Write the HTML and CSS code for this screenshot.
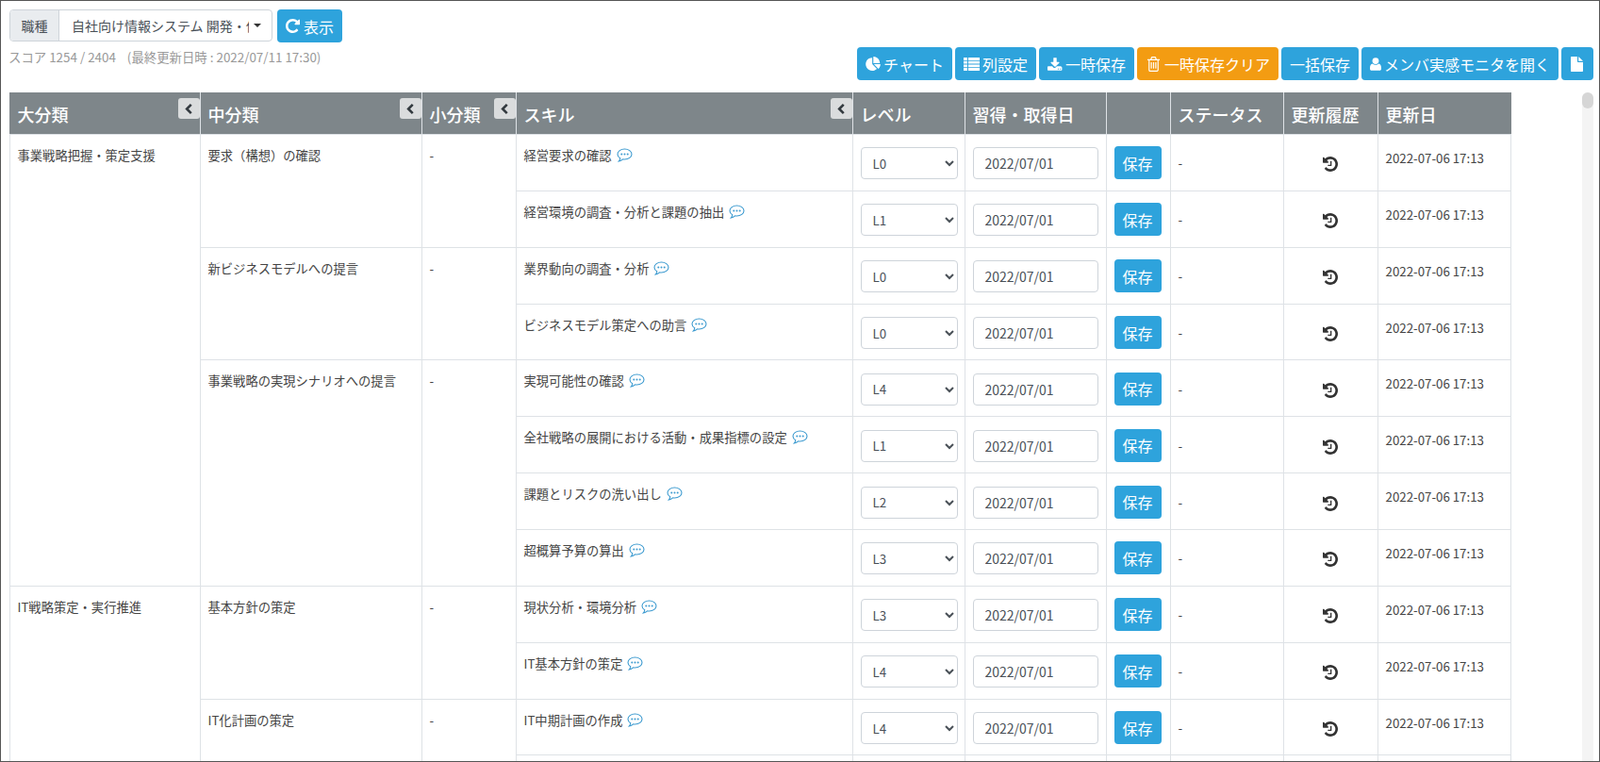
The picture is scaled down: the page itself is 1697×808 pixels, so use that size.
FILE: index.html
```html
<!DOCTYPE html>
<html lang="ja">
<head>
<meta charset="utf-8">
<title>スキル管理</title>
<link rel="stylesheet" href="styles.css">
</head>
<body>
<svg class="defs" aria-hidden="true">
  <symbol id="i-repeat" viewBox="0 0 1536 1536"><path d="M1536 128v448q0 26-19 45t-45 19h-448q-42 0-59-40-17-39 14-69l138-138Q969 256 768 256q-104 0-198.500 40.500T406 406 296.500 569.500 256 768t40.500 198.500T406 1130t163.500 109.500T768 1280q119 0 225-52t179-147q7-10 23-12 14 0 25 9l137 138q9 8 9.500 20.500t-7.500 22.500q-109 132-264 204.500T768 1536q-156 0-298-61t-245-164-164-245T0 768t61-298 164-245T470 61 768 0q147 0 284.500 55.500T1297 212l130-129q29-31 70-14 39 17 39 59z"/></symbol>
  <symbol id="i-pie" viewBox="0 0 1728 1664"><path d="M768 890l546 546q-106 108-247.500 168T768 1664q-209 0-385.500-103T103 1281 0 896t103-385.500T383 231 768 128v762zm187 6h773q0 157-60 298.500T1492 1442L955 896zm709-128H896V0q209 0 385.500 103T1561 383t103 385z"/></symbol>
  <symbol id="i-list" viewBox="0 0 17 14"><path d="M0 0h4v2.900H0zM5 0h12v2.900H5zM0 3.700h4v2.900H0zM5 3.700h12v2.900H5zM0 7.400h4v2.900H0zM5 7.400h12v2.900H5zM0 11.100h4V14H0zM5 11.100h12V14H5z"/></symbol>
  <symbol id="i-download" viewBox="0 0 1792 1536"><path d="M1344 1344q0-26-19-45t-45-19-45 19-19 45 19 45 45 19 45-19 19-45zm256 0q0-26-19-45t-45-19-45 19-19 45 19 45 45 19 45-19 19-45zm128-224v320q0 40-28 68t-68 28H96q-40 0-68-28t-28-68v-320q0-40 28-68t68-28h465l135 136q58 56 136 56t136-56l136-136h464q40 0 68 28t28 68zm-325-569q17 41-14 70L941 1069q-18 19-45 19t-45-19L403 621q-31-29-14-70 17-39 59-39h256V64q0-26 19-45t45-19h256q26 0 45 19t19 45v448h256q42 0 59 39z"/></symbol>
  <symbol id="i-trash" viewBox="190 128 1410 1536" preserveAspectRatio="none"><path d="M704 736v576q0 14-9 23t-23 9h-64q-14 0-23-9t-9-23V736q0-14 9-23t23-9h64q14 0 23 9t9 23zm256 0v576q0 14-9 23t-23 9h-64q-14 0-23-9t-9-23V736q0-14 9-23t23-9h64q14 0 23 9t9 23zm256 0v576q0 14-9 23t-23 9h-64q-14 0-23-9t-9-23V736q0-14 9-23t23-9h64q14 0 23 9t9 23zm128 724V512H448v948q0 22 7 40.500t14.500 27 10.500 8.500h832q3 0 10.500-8.500t14.500-27 7-40.500zM672 384h448l-48-117q-7-9-17-11H738q-10 2-17 11zm928 32v64q0 14-9 23t-23 9h-96v948q0 83-47 143.500t-113 60.500H480q-66 0-113-58.500T320 1464V512h-96q-14 0-23-9t-9-23v-64q0-14 9-23t23-9h309l70-167q15-37 54-63t79-26h320q40 0 79 26t54 63l70 167h309q14 0 23 9t9 23z"/></symbol>
  <symbol id="i-user" viewBox="0 0 14 16"><circle cx="7" cy="4" r="4"/><path d="M3.200 7.500C4.200 8.500 5.500 9 7 9s2.800-.5 3.800-1.500C13 7.500 14 10 14 13.500c0 1.500-.9 2.500-2.100 2.500H2.100C.9 16 0 15 0 13.500 0 10 1 7.500 3.200 7.500z"/></symbol>
  <symbol id="i-file" viewBox="0 0 13 16"><path d="M0 1c0-.6.400-1 1-1h6v5c0 .6.400 1 1 1h5v9c0 .6-.4 1-1 1H1c-.6 0-1-.4-1-1zM8.200 0L13 4.800H8.200z"/></symbol>
  <symbol id="i-history" viewBox="0 0 1536 1536"><path d="M1536 768q0 156-61 298t-164 245-245 164-298 61q-172 0-327-72.500T177 1259q-7-10-6.500-22.500T179 1216l137-138q10-9 25-9 16 2 23 12 73 95 179 147t225 52q104 0 198.500-40.500T1130 1130t109.500-163.500T1280 768t-40.500-198.500T1130 406 966.500 296.500 768 256q-98 0-188 35.500T420 393l137 138q31 30 14 69-17 40-59 40H64q-26 0-45-19T0 576V128q0-42 40-59 39-17 69 14l130 129Q346 113 483 56.500T768 0q156 0 298 61t245 164 164 245 61 298zM896 480v448q0 14-9 23t-23 9H544q-14 0-23-9t-9-23v-64q0-14 9-23t23-9h224V480q0-14 9-23t23-9h64q14 0 23 9t9 23z"/></symbol>
  <symbol id="i-comment" viewBox="0 0 17 16"><path class="bubble" d="M8.500 1C4.400 1 1 3.400 1 6.500c0 1.700 1.100 3.300 2.800 4.300-.1 1.200-.6 2.200-1.400 3.100 1.600-.3 3.200-1.200 4.200-2.100.6.100 1.300.2 1.900.2 4.100 0 7.500-2.400 7.500-5.500S12.600 1 8.500 1z"/><circle cx="5.300" cy="6.500" r="1"/><circle cx="8.500" cy="6.500" r="1"/><circle cx="11.700" cy="6.500" r="1"/></symbol>
  <symbol id="i-left" viewBox="0 0 8 12"><path d="M6 0L8 2 4 6l4 4-2 2L0 6z"/></symbol>
</svg>

<div class="frame">
  <header class="topbar">
    <div class="top-left">
      <div class="form-row">
        <div class="input-group">
          <span class="group-label">職種</span>
          <div class="group-select">
            <span class="select-text">自社向け情報システム 開発・保守</span>
            <span class="caret"></span>
          </div>
        </div>
        <button class="btn btn-show" type="button"><svg class="ic ic-repeat"><use href="#i-repeat"/></svg>表示</button>
      </div>
      <p class="score">スコア 1254 / 2404 &nbsp;&nbsp;&nbsp;(最終更新日時 : 2022/07/11 17:30)</p>
    </div>
    <div class="toolbar">
      <button class="btn" type="button"><svg class="ic ic-pie"><use href="#i-pie"/></svg>チャート</button>
      <button class="btn" type="button"><svg class="ic ic-list"><use href="#i-list"/></svg>列設定</button>
      <button class="btn" type="button"><svg class="ic ic-download"><use href="#i-download"/></svg>一時保存</button>
      <button class="btn btn-warn" type="button"><svg class="ic ic-trash"><use href="#i-trash"/></svg>一時保存クリア</button>
      <button class="btn" type="button">一括保存</button>
      <button class="btn" type="button"><svg class="ic ic-user"><use href="#i-user"/></svg>メンバ実感モニタを開く</button>
      <button class="btn" type="button"><svg class="ic ic-file"><use href="#i-file"/></svg></button>
    </div>
  </header>

  <div class="content">
    <div class="table-wrap">
      <table class="skills">
        <colgroup>
          <col class="c-major"><col class="c-mid"><col class="c-minor"><col class="c-skill"><col class="c-level"><col class="c-date"><col class="c-save"><col class="c-status"><col class="c-hist"><col class="c-updated">
        </colgroup>
        <thead>
          <tr>
            <th>大分類<button class="collapse" type="button"><svg class="ic-left"><use href="#i-left"/></svg></button></th>
            <th>中分類<button class="collapse" type="button"><svg class="ic-left"><use href="#i-left"/></svg></button></th>
            <th>小分類<button class="collapse" type="button"><svg class="ic-left"><use href="#i-left"/></svg></button></th>
            <th>スキル<button class="collapse" type="button"><svg class="ic-left"><use href="#i-left"/></svg></button></th>
            <th>レベル</th><th>習得・取得日</th><th></th><th>ステータス</th><th>更新履歴</th><th>更新日</th>
          </tr>
        </thead>
        <tbody id="rows"></tbody>
      </table>
    </div>
    <div class="scrollbar"><div class="thumb"></div></div>
  </div>
</div>
<script src="rows.js"></script>
</body>
</html>
```
FILE: rows.js
```js
var rows = [
  ["事業戦略把握・策定支援", 8, "要求（構想）の確認", 2, "経営要求の確認", "L0"],
  [null, 0, null, 0, "経営環境の調査・分析と課題の抽出", "L1"],
  [null, 0, "新ビジネスモデルへの提言", 2, "業界動向の調査・分析", "L0"],
  [null, 0, null, 0, "ビジネスモデル策定への助言", "L0"],
  [null, 0, "事業戦略の実現シナリオへの提言", 4, "実現可能性の確認", "L4"],
  [null, 0, null, 0, "全社戦略の展開における活動・成果指標の設定", "L1"],
  [null, 0, null, 0, "課題とリスクの洗い出し", "L2"],
  [null, 0, null, 0, "超概算予算の算出", "L3"],
  ["IT戦略策定・実行推進", 5, "基本方針の策定", 2, "現状分析・環境分析", "L3"],
  [null, 0, null, 0, "IT基本方針の策定", "L4"],
  [null, 0, "IT化計画の策定", 3, "IT中期計画の作成", "L4"]
];
var levels = ["L0", "L1", "L2", "L3", "L4", "L5"];
var html = "";
rows.forEach(function (r) {
  html += "<tr>";
  if (r[0]) html += '<td class="top" rowspan="' + r[1] + '">' + r[0] + "</td>";
  if (r[2]) {
    html += '<td class="top" rowspan="' + r[3] + '">' + r[2] + "</td>";
    html += '<td class="top" rowspan="' + r[3] + '">-</td>';
  }
  html += '<td class="top">' + r[4] + ' <svg class="ic-comment"><use href="#i-comment"/></svg></td>';
  html += '<td class="mid"><select class="ctl ctl-level">' + levels.map(function (l) {
    return "<option" + (l === r[5] ? " selected" : "") + ">" + l + "</option>";
  }).join("") + "</select></td>";
  html += '<td class="mid"><input class="ctl ctl-date" type="text" value="2022/07/01"></td>';
  html += '<td class="save"><button class="btn btn-save" type="button">保存</button></td>';
  html += '<td class="mid">-</td>';
  html += '<td class="mid"><svg class="ic-history"><use href="#i-history"/></svg></td>';
  html += '<td class="top updated">2022-07-06 17:13</td>';
  html += "</tr>";
});
html += '<tr class="tail"><td></td><td></td><td></td><td></td><td></td><td></td><td></td></tr>';
document.getElementById("rows").innerHTML = html;
```
FILE: styles.css
```css
* { box-sizing: border-box; }
html, body { margin: 0; height: 100%; overflow: hidden; }
body {
  font-family: "Noto Sans CJK JP", "Noto Sans", sans-serif;
  font-size: 13.3px;
  color: #444;
  background: #fff;
}
.defs { display: none; }
.frame {
  height: 808px;
  border: 1px solid #555;
  padding: 9px 6px 0 8px;
  display: flex;
  flex-direction: column;
  overflow: hidden;
}
.topbar {
  height: 88px;
  flex: none;
  display: flex;
  justify-content: space-between;
}
.form-row { display: flex; gap: 5px; padding-left: 1px; }
.input-group {
  width: 279px;
  height: 34px;
  display: flex;
  border: 1px solid #ced4da;
  border-radius: 4px;
  overflow: hidden;
  font-size: 14px;
  color: #495057;
}
.group-label {
  width: 52px;
  flex: none;
  background: #e9ecef;
  border-right: 1px solid #ced4da;
  display: flex;
  align-items: center;
  justify-content: center;
}
.group-select {
  flex: 1;
  min-width: 0;
  display: flex;
  align-items: center;
  padding-left: 13px;
}
.select-text {
  width: 188px;
  overflow: hidden;
  white-space: nowrap;
}
.caret {
  margin-left: 5px;
  width: 0;
  height: 0;
  border-left: 4px solid transparent;
  border-right: 4px solid transparent;
  border-top: 4px solid #333;
}
.score {
  margin: 5px 0 0;
  font-size: 13.4px;
  line-height: 20px;
  color: #999;
  white-space: nowrap;
}
.toolbar {
  display: flex;
  gap: 3px;
  align-items: flex-start;
  padding-top: 40px;
}
.btn {
  height: 35px;
  padding: 0 9px;
  border: 0;
  border-radius: 4px;
  background: #2ea3dc;
  color: #fff;
  font: inherit;
  font-size: 16px;
  line-height: 24px;
  display: inline-flex;
  align-items: center;
  white-space: nowrap;
}
.btn-warn { background: #f39c12; }
.ic { fill: currentColor; margin-right: 3px; flex: none; }
.ic-repeat { width: 15px; height: 15px; margin-right: 4px; }
.ic-pie { width: 16px; height: 15px; }
.ic-list { width: 17px; height: 14px; }
.ic-download { width: 16px; height: 14px; }
.ic-trash { width: 13px; height: 16px; margin-left: 2px; margin-right: 5px; }
.ic-user { width: 12px; height: 14px; }
.ic-file { width: 13px; height: 16px; margin-left: 1px; margin-right: 2px; }
.content { flex: 1; min-height: 0; display: flex; }
.table-wrap { flex: 1; min-width: 0; overflow: hidden; }
.scrollbar {
  width: 12px;
  flex: none;
  background: #f4f4f4;
  border-radius: 6px 6px 0 0;
}
.thumb { height: 17px; background: #d6d6d6; border-radius: 6px; }
.skills {
  table-layout: fixed;
  width: 1592px;
  border-collapse: collapse;
  margin-left: .5px;
}
.c-major { width: 202px; }
.c-mid { width: 235px; }
.c-minor { width: 100px; }
.c-skill { width: 357px; }
.c-level { width: 119px; }
.c-date { width: 150px; }
.c-save { width: 68px; }
.c-status { width: 120px; }
.c-hist { width: 100px; }
.c-updated { width: 141px; }
.skills th {
  position: relative;
  height: 44px;
  padding: 0 8px;
  background: #7e868a;
  color: #fff;
  font-size: 18px;
  font-weight: 500;
  text-align: left;
  border: 1px solid #dee2e6;
  border-top-color: #7e868a;
  white-space: nowrap;
}
.skills th:first-child { border-left-color: #7e868a; }
.skills th:last-child { border-right-color: #7e868a; }
.collapse {
  position: absolute;
  top: 5px;
  right: 0;
  width: 23px;
  height: 22px;
  padding: 0;
  border: 0;
  border-radius: 3px;
  background: #dadcdd;
  display: flex;
  align-items: center;
  justify-content: center;
}
.ic-left { width: 8px; height: 11px; fill: #333a3f; }
.skills td {
  height: 59.86px;
  padding: 0 8px;
  border: 1px solid #dee2e6;
  line-height: 20px;
  vertical-align: middle;
}
.skills td.top { vertical-align: top; padding-top: 12px; }
.skills td.updated { padding-top: 15px; }
.skills td.mid { padding-top: 2px; }
.skills td.save { padding-top: 1px; }
.skills .tail td { height: 20px; }
.ic-comment {
  width: 17px;
  height: 16px;
  margin-left: 2px;
  vertical-align: -3px;
  fill: #3d9bd0;
}
.bubble { fill: none; stroke: #3d9bd0; stroke-width: 1.1; }
.ctl {
  height: 34px;
  display: block;
  border: 1px solid #ced4da;
  border-radius: 4px;
  background: #fff;
  color: #495057;
  font: inherit;
  font-size: 14px;
}
.ctl-level { width: 103px; padding-left: 8px; font-size: 13.3px; }
.ctl-date { width: 133px; padding: 0 12px; }
.btn-save { display: flex; }
.ic-history { display: block; margin: 2px auto 0; width: 16px; height: 16px; fill: #333; }
```
